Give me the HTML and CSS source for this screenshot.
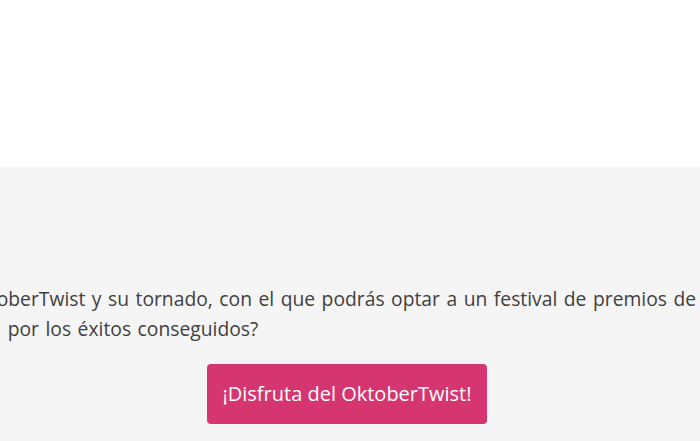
FILE: index.html
```html
<!DOCTYPE html>
<html lang="es">
<head>
  <meta charset="UTF-8" />
  <meta name="viewport" content="width=device-width, initial-scale=1.0" />
  <title>OktoberTwist</title>
  <link rel="stylesheet" href="styles.css">
</head>
<body>

  <!-- Hero image area -->
  <div class="hero"></div>

  <section class="promo">
    <p class="promo-text">
      ¿Todavía no conoces la nueva promoción del OktoberTwist y su tornado, con el que podrás optar a un festival de premios de la<br>
      por los éxitos conseguidos?
    </p>
    <div class="promo-action">
      <a href="#" class="btn">¡Disfruta del OktoberTwist!</a>
    </div>
  </section>

</body>
</html>
```

FILE: styles.css
```css
* { box-sizing: border-box; margin: 0; padding: 0; }

html, body {
  width: 700px;
  overflow: hidden;
}

body {
  font-family: 'Open Sans', sans-serif;
  background: #f5f5f5;
  color: #404040;
  min-height: 100vh;
}

.hero {
  height: 167px;
  background: #fff;
}

.promo {
  padding-top: 117px;
}

.promo-text {
  width: 1400px;
  margin-left: -567px;
  text-align: center;
  font-size: 19.3px;
  word-spacing: 1.5px;
  line-height: 30px;
  white-space: nowrap;
}

.promo-action {
  display: flex;
  justify-content: center;
  padding-right: 6px;
  margin-top: 20px;
}

.btn {
  display: inline-block;
  width: 280px;
  height: 60px;
  line-height: 60px;
  text-align: center;
  background: #d6366f;
  color: #fff;
  font-size: 20px;
  text-decoration: none;
  border-radius: 4px;
}
```
